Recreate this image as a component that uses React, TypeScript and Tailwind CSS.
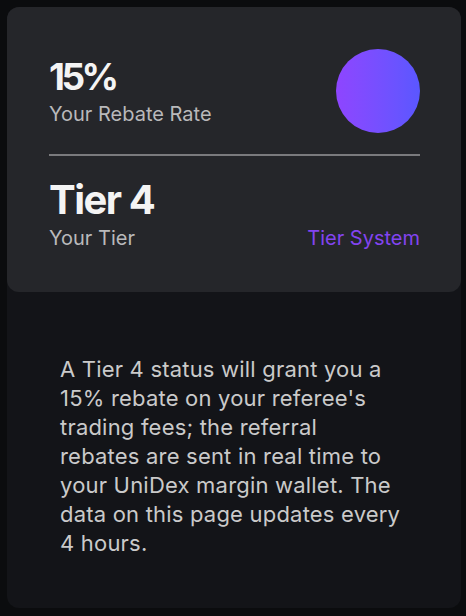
import React from "react";

const lines = [
  "A Tier 4 status will grant you a",
  "15% rebate on your referee's",
  "trading fees; the referral",
  "rebates are sent in real time to",
  "your UniDex margin wallet. The",
  "data on this page updates every",
  "4 hours.",
];

export default function App() {
  return (
    <div className="w-[466px] h-[616px] bg-[#0b0c0e] pl-[7px] pr-[5px] pt-[7px] font-['Inter',sans-serif]">
      <div className="h-[601px] rounded-[12px] bg-[#131418] flex flex-col">
        <div className="rounded-[12px] bg-[#25262a] pl-[42px] pr-[41px] pt-[42px] pb-[42px]">
          <div className="flex items-center justify-between">
            <div className="flex flex-col">
              <span className="text-[37px] leading-[40px] font-bold tracking-[-3.5px] text-[#f4f4f4]">
                15%
              </span>
              <span className="text-[20px] leading-[24px] text-[#b9b9bb] mt-[5px]">
                Your Rebate Rate
              </span>
            </div>
            <div className="w-[84px] h-[84px] rounded-full bg-gradient-to-r from-[#8e45ff] to-[#5a57ff]" />
          </div>
          <div className="h-[2px] bg-[#7a7a7d] mt-[21px]" />
          <div className="flex items-end justify-between mt-[22px]">
            <div className="flex flex-col">
              <span className="text-[40px] leading-[44px] font-bold tracking-[-1.5px] text-[#f4f4f4]">
                Tier 4
              </span>
              <span className="text-[20px] leading-[24px] text-[#b9b9bb] mt-[4px]">
                Your Tier
              </span>
            </div>
            <span className="text-[20px] leading-[24px] text-[#8344f0]">Tier System</span>
          </div>
        </div>
        <div className="pt-[63px] pl-[53px]">
          <p className="text-[22px] leading-[29px] text-[#cacaca] tracking-[0.2px] whitespace-nowrap">
            {lines.map((l, i) => (
              <React.Fragment key={i}>
                {l}
                {i < lines.length - 1 && <br />}
              </React.Fragment>
            ))}
          </p>
        </div>
      </div>
    </div>
  );
}
